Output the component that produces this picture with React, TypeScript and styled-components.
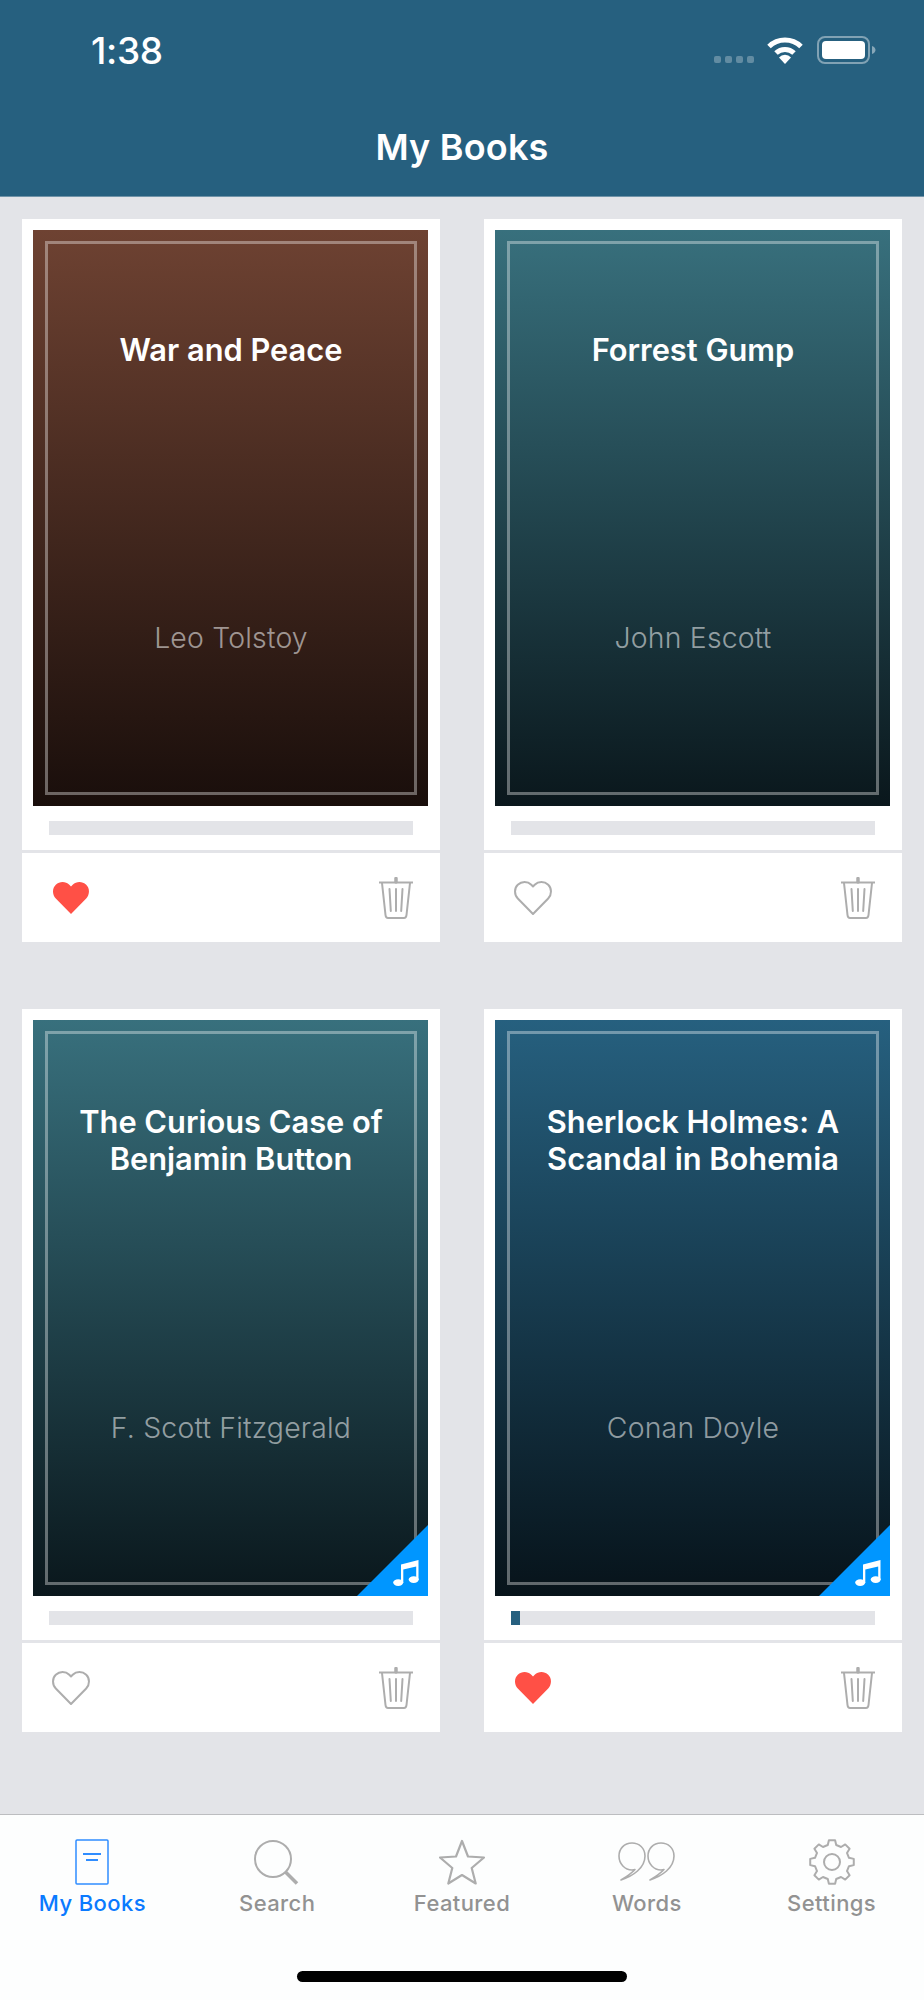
import React from 'react';
import styled, { createGlobalStyle } from 'styled-components';

const GlobalStyle = createGlobalStyle`
  html, body {
    margin: 0;
    padding: 0;
    background: #e3e4e8;
    font-family: Inter, "Liberation Sans", sans-serif;
  }
  * { box-sizing: border-box; }
`;

const Screen = styled.div`
  width: 924px;
  height: 2000px;
  display: flex;
  flex-direction: column;
  overflow: hidden;
  background: #e3e4e8;
`;

const Header = styled.header`
  height: 197px;
  background: #26607f;
  color: #fff;
  border-bottom: 1px solid #6f93a8;
`;

const StatusBar = styled.div`
  height: 112px;
  padding: 28px 47px 0 91px;
  display: flex;
  align-items: flex-start;
  justify-content: space-between;
`;

const Time = styled.div`
  margin-top: 1px;
  font-size: 37px;
  line-height: 44px;
  font-weight: 500;
  letter-spacing: -0.3px;
`;

const StatusIcons = styled.div`
  display: flex;
  align-items: flex-start;
  padding-top: 8px;
`;

const SignalDots = styled.div`
  display: flex;
  gap: 4px;
  margin: 20px 13px 0 0;
`;

const SignalDot = styled.span`
  width: 7px;
  height: 7px;
  border-radius: 2px;
  background: rgba(255, 255, 255, 0.28);
`;

const WifiSlot = styled.div`
  margin: 1px 14px 0 0;
`;

const NavTitle = styled.h1`
  margin: 0;
  text-align: center;
  font-size: 36px;
  line-height: 70px;
  font-weight: 600;
  letter-spacing: 0.2px;
`;

const Shelf = styled.main`
  flex: 1;
  padding: 22px;
  display: grid;
  grid-template-columns: 418px 418px;
  grid-auto-rows: 723px;
  column-gap: 44px;
  row-gap: 67px;
`;

const Card = styled.article`
  background: #fff;
  display: flex;
  flex-direction: column;
`;

const Cover = styled.div<{ $top: string; $bottom: string }>`
  position: relative;
  height: 576px;
  margin: 11px 12px 0 11px;
  padding: 11px 11px 11px 12px;
  background: linear-gradient(${(p) => p.$top}, ${(p) => p.$bottom});
`;

const CoverFrame = styled.div`
  height: 100%;
  border: 3px solid rgba(255, 255, 255, 0.36);
  display: flex;
  flex-direction: column;
  align-items: center;
`;

const TitleSlot = styled.div`
  height: 211px;
  padding: 0 20px;
  display: flex;
  align-items: center;
`;

const BookTitle = styled.h2`
  margin: 0;
  color: #fff;
  text-align: center;
  font-size: 30.8px;
  line-height: 37px;
  font-weight: 600;
`;

const Author = styled.div`
  margin-top: 164px;
  color: rgba(255, 255, 255, 0.55);
  font-size: 28.4px;
  line-height: 38px;
  font-weight: 300;
  letter-spacing: 0.2px;
`;

const AudioBadge = styled.div`
  position: absolute;
  right: 0;
  bottom: 0;
  width: 71px;
  height: 71px;
  background: #0096ff;
  clip-path: polygon(100% 0, 100% 100%, 0 100%);

  svg {
    position: absolute;
    right: 9px;
    bottom: 10px;
  }
`;

const Progress = styled.div`
  height: 14px;
  margin: 15px 27px;
  background: #e3e4e8;
`;

const ProgressFill = styled.div`
  height: 100%;
  background: #26607f;
`;

const Actions = styled.div`
  height: 92px;
  border-top: 3px solid #e3e4e8;
  padding: 0 27px 0 30px;
  display: flex;
  align-items: center;
  justify-content: space-between;
`;

const TabBar = styled.nav`
  height: 186px;
  background: #fdfefe;
  border-top: 1px solid #bcbdc0;
  display: flex;
  flex-direction: column;
  align-items: center;
`;

const TabRow = styled.div`
  width: 100%;
  height: 156px;
  padding-top: 24px;
  display: grid;
  grid-template-columns: repeat(5, 1fr);
`;

const TabItem = styled.div<{ $active?: boolean }>`
  display: flex;
  flex-direction: column;
  align-items: center;
  color: ${(p) => (p.$active ? '#0a7aff' : '#929292')};
`;

const TabIcon = styled.div`
  height: 46px;
  display: flex;
  align-items: center;
  justify-content: center;
`;

const TabLabel = styled.span`
  margin-top: 3px;
  font-size: 22px;
  line-height: 30px;
  font-weight: 500;
  letter-spacing: 0.4px;
`;

const HomeIndicator = styled.div`
  width: 330px;
  height: 11px;
  border-radius: 6px;
  background: #000;
`;

const ICON_GRAY = '#adadad';

const WifiIcon = () => (
  <svg width="36" height="27" viewBox="0 0 36 27" fill="none">
    <path d="M2 9.5A23 23 0 0 1 34 9.5" stroke="#fff" strokeWidth="5" />
    <path d="M9 16A13 13 0 0 1 27 16" stroke="#fff" strokeWidth="5" />
    <path d="M18 27L12 20.5A8 8 0 0 1 24 20.5Z" fill="#fff" />
  </svg>
);

const BatteryIcon = () => (
  <svg width="60" height="28" viewBox="0 0 60 28" fill="none">
    <rect x="1" y="1" width="51" height="26" rx="7" stroke="#fff" strokeOpacity="0.42" strokeWidth="2" />
    <rect x="5" y="5" width="43" height="18" rx="4" fill="#fff" />
    <path d="M55 10C57.5 11 58.5 12.5 58.5 14C58.5 15.5 57.5 17 55 18Z" fill="#fff" fillOpacity="0.45" />
  </svg>
);

const HeartIcon = ({ filled }: { filled: boolean }) => (
  <svg width="38" height="34" viewBox="-1 -1 38 34">
    <path
      d="M18 32L2.8 16.5C-0.9 12.7-0.9 6.3 2.8 2.8C6.6-0.9 12.6-0.9 16.3 2.8L18 4.5L19.7 2.8C23.4-0.9 29.4-0.9 33.2 2.8C36.9 6.3 36.9 12.7 33.2 16.5Z"
      fill={filled ? '#ff5046' : 'none'}
      stroke={filled ? 'none' : ICON_GRAY}
      strokeWidth={2}
      strokeLinejoin="round"
    />
  </svg>
);

const TrashIcon = () => (
  <svg width="34" height="42" viewBox="0 0 34 42" fill="none" stroke={ICON_GRAY} strokeWidth="2" strokeLinecap="round">
    <path d="M16.999 1.5V5" strokeWidth="3.5" />
    <path d="M0.5 5.5H33.5" />
    <path d="M3 6L6.5 38C6.7 40 7.5 41 9 41H25C26.5 41 27.3 40 27.5 38L31 6" />
    <path d="M10.5 12L11.8 34M17 12V34M23.5 12L22.2 34" />
  </svg>
);

const MusicIcon = () => (
  <svg width="26" height="27" viewBox="0 0 26 27">
    <path d="M8 5.5L25.5 1V21H23.2V7.5L10.3 10.6V24H8Z" fill="#fff" />
    <ellipse cx="5.2" cy="23.6" rx="5" ry="3.4" fill="#fff" />
    <ellipse cx="20.7" cy="20.6" rx="5" ry="3.4" fill="#fff" />
  </svg>
);

const BooksTabIcon = () => (
  <svg width="34" height="46" viewBox="0 0 34 46" fill="none" stroke="#2f8dff">
    <rect x="1" y="1" width="32" height="44" rx="1" strokeWidth="1.5" />
    <path d="M8 15H26M11 21H23" strokeWidth="2" />
  </svg>
);

const SearchTabIcon = () => (
  <svg width="46" height="46" viewBox="0 0 46 46" fill="none" stroke={ICON_GRAY}>
    <circle cx="19" cy="20" r="18" strokeWidth="2" />
    <path d="M31.5 33L43 44.5" strokeWidth="3.5" />
  </svg>
);

const StarTabIcon = () => (
  <svg width="46" height="46" viewBox="0 0 46 46" fill="none" stroke={ICON_GRAY} strokeWidth="2.2" strokeLinejoin="round">
    <path d="M23 2L29 17.5L45 18.5L32.7 29L36.7 44.5L23 36L9.3 44.5L13.3 29L1 18.5L17 17.5Z" />
  </svg>
);

const QUOTE_MARK =
  'M3 38C15 34 27 26 27 14C27 6 21 1 14 1C6 1 1 7 1 14C1 22 7 28 14 28C15 28 16 28 17 27.5C13 32 8 35 3 38Z';

const WordsTabIcon = () => (
  <svg width="58" height="40" viewBox="0 0 58 40" fill="none" stroke={ICON_GRAY} strokeWidth="1.6" strokeLinejoin="round">
    <path d={QUOTE_MARK} />
    <path d={QUOTE_MARK} transform="translate(29 0)" />
  </svg>
);

// teeth of the settings cog, worked out round the centre
const gearPath = (() => {
  const teeth = 8;
  const points: string[] = [];
  for (let i = 0; i < teeth; i++) {
    const a = (i / teeth) * Math.PI * 2 - Math.PI / 2;
    const step = Math.PI / teeth;
    const at = (r: number, t: number) =>
      `${(23 + r * Math.cos(t)).toFixed(2)} ${(23 + r * Math.sin(t)).toFixed(2)}`;
    points.push(at(17.5, a - step * 0.62), at(22, a - step * 0.36), at(22, a + step * 0.36), at(17.5, a + step * 0.62));
  }
  return `M${points.join('L')}Z`;
})();

const SettingsTabIcon = () => (
  <svg width="46" height="46" viewBox="0 0 46 46" fill="none" stroke={ICON_GRAY} strokeWidth="2" strokeLinejoin="round">
    <path d={gearPath} />
    <circle cx="23" cy="23" r="8" />
  </svg>
);

type Book = {
  title: React.ReactNode;
  author: string;
  top: string;
  bottom: string;
  liked: boolean;
  audio: boolean;
  progress: number;
};

const BOOKS: Book[] = [
  { title: 'War and Peace', author: 'Leo Tolstoy', top: '#6e4232', bottom: '#190e0b', liked: true, audio: false, progress: 0 },
  { title: 'Forrest Gump', author: 'John Escott', top: '#38707d', bottom: '#0a171c', liked: false, audio: false, progress: 0 },
  {
    title: <>The Curious Case of<br />Benjamin Button</>,
    author: 'F. Scott Fitzgerald',
    top: '#38707d',
    bottom: '#0a171c',
    liked: false,
    audio: true,
    progress: 0,
  },
  {
    title: <>Sherlock Holmes: A<br />Scandal in Bohemia</>,
    author: 'Conan Doyle',
    top: '#26607f',
    bottom: '#07131a',
    liked: true,
    audio: true,
    progress: 2.5,
  },
];

const TABS = [
  { label: 'My Books', icon: <BooksTabIcon />, active: true },
  { label: 'Search', icon: <SearchTabIcon /> },
  { label: 'Featured', icon: <StarTabIcon /> },
  { label: 'Words', icon: <WordsTabIcon /> },
  { label: 'Settings', icon: <SettingsTabIcon /> },
];

const App: React.FC = () => {
  return (
    <Screen>
      <GlobalStyle />
      <Header>
        <StatusBar>
          <Time>1:38</Time>
          <StatusIcons>
            <SignalDots>
              <SignalDot />
              <SignalDot />
              <SignalDot />
              <SignalDot />
            </SignalDots>
            <WifiSlot>
              <WifiIcon />
            </WifiSlot>
            <BatteryIcon />
          </StatusIcons>
        </StatusBar>
        <NavTitle>My Books</NavTitle>
      </Header>

      <Shelf>
        {BOOKS.map((book) => (
          <Card key={book.author}>
            <Cover $top={book.top} $bottom={book.bottom}>
              <CoverFrame>
                <TitleSlot>
                  <BookTitle>{book.title}</BookTitle>
                </TitleSlot>
                <Author>{book.author}</Author>
              </CoverFrame>
              {book.audio && (
                <AudioBadge>
                  <MusicIcon />
                </AudioBadge>
              )}
            </Cover>
            <Progress>
              <ProgressFill style={{ width: `${book.progress}%` }} />
            </Progress>
            <Actions>
              <HeartIcon filled={book.liked} />
              <TrashIcon />
            </Actions>
          </Card>
        ))}
      </Shelf>

      <TabBar>
        <TabRow>
          {TABS.map((tab) => (
            <TabItem key={tab.label} $active={tab.active}>
              <TabIcon>{tab.icon}</TabIcon>
              <TabLabel>{tab.label}</TabLabel>
            </TabItem>
          ))}
        </TabRow>
        <HomeIndicator />
      </TabBar>
    </Screen>
  );
};

export default App;
